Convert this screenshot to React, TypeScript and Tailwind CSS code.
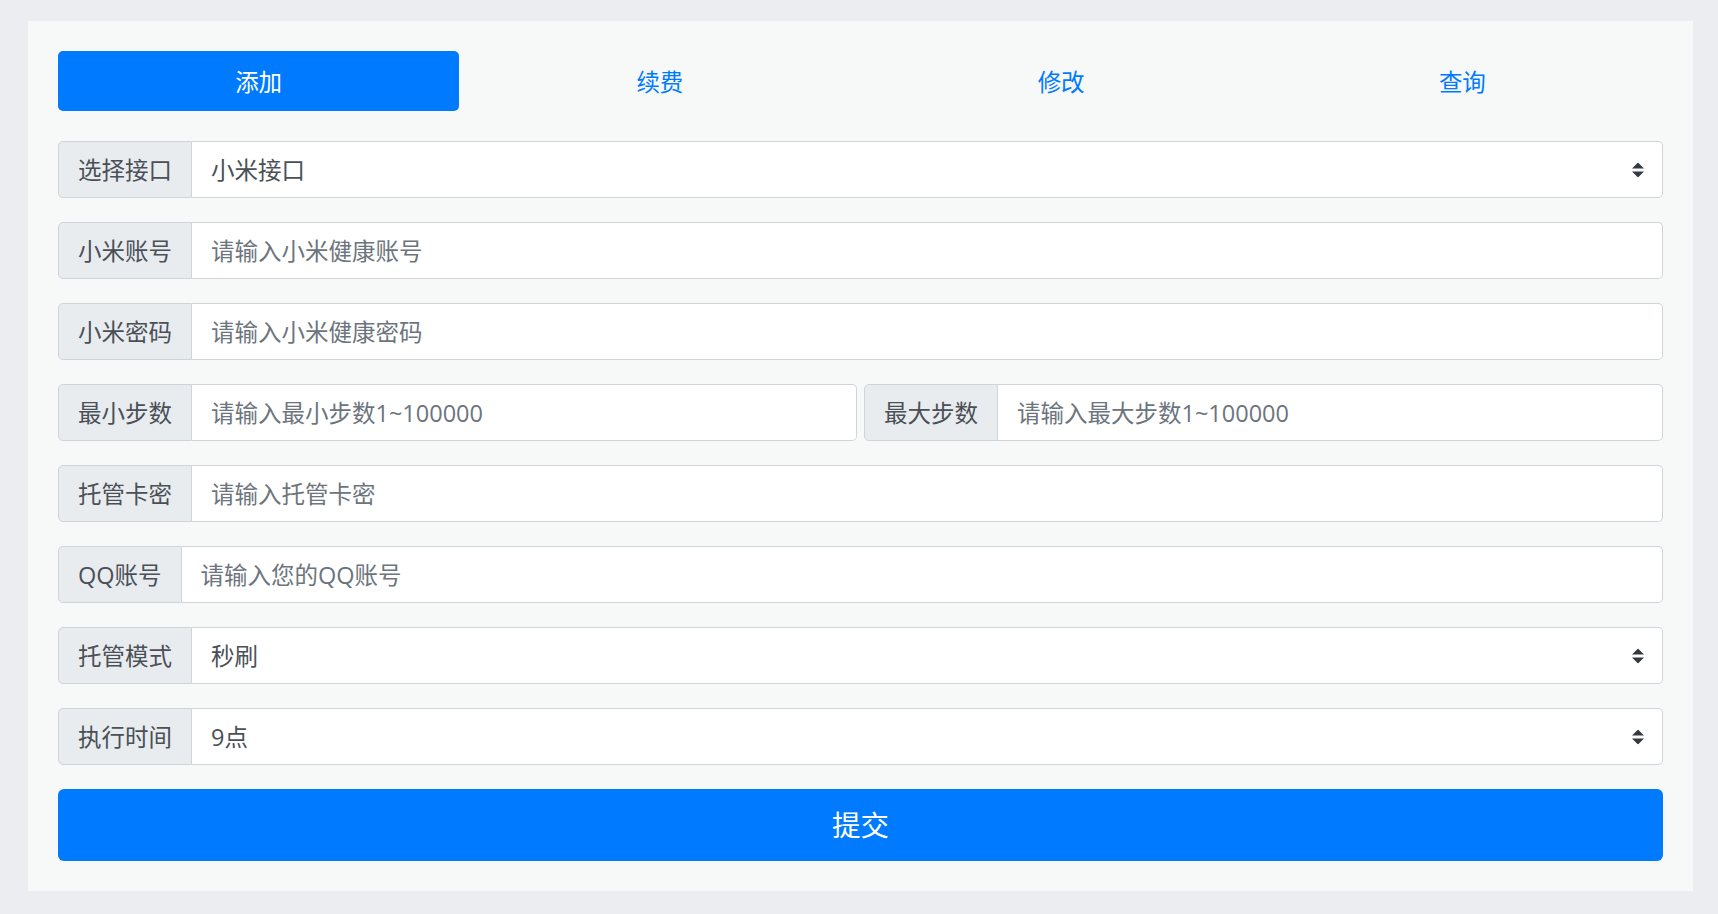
import React, { useState } from 'react';

const font = { fontFamily: '"Open Sans", "Noto Sans CJK SC", "Noto Sans", sans-serif' };

const tabs = ['添加', '续费', '修改', '查询'];

const Arrow: React.FC = () => (
  <svg
    className="pointer-events-none absolute right-[19px] top-1/2 -translate-y-1/2"
    width="12"
    height="15"
    viewBox="0 0 4 5"
  >
    <path fill="#343a40" d="M2 0L0 2h4zm0 5L0 3h4z" />
  </svg>
);

const Label: React.FC<{ text: string }> = ({ text }) => (
  <div className="flex items-center shrink-0 bg-[#e9ecef] border border-[#ced4da] rounded-l-[5px] px-[19px] pt-[2px] text-[#495057]">
    {text}
  </div>
);

const TextRow: React.FC<{ label: string; placeholder: string; className?: string }> = ({ label, placeholder, className }) => (
  <div className={`flex h-[57px] ${className ?? ''}`}>
    <Label text={label} />
    <input
      type="text"
      placeholder={placeholder}
      className="flex-1 min-w-0 bg-white border border-l-0 border-[#ced4da] rounded-r-[5px] px-[19px] pt-[2px] text-[#495057] placeholder:text-[#6c757d] outline-none"
    />
  </div>
);

const SelectRow: React.FC<{ label: string; options: string[] }> = ({ label, options }) => (
  <div className="flex h-[57px] mb-[24px]">
    <Label text={label} />
    <div className="relative flex-1">
      <select className="w-full h-full appearance-none bg-white border border-l-0 border-[#ced4da] rounded-r-[5px] px-[19px] pt-[2px] text-[#495057] outline-none">
        {options.map((o) => (
          <option key={o}>{o}</option>
        ))}
      </select>
      <Arrow />
    </div>
  </div>
);

const App: React.FC = () => {
  const [active, setActive] = useState(0);

  return (
    <div className="min-h-screen bg-[#ebedf0] pt-[21px] pb-[23px]" style={font}>
      <div className="ml-[28px] w-[1665px] bg-[#f7f8f8] p-[30px] text-[23.5px]">
        <div className="grid grid-cols-4 h-[60px] mb-[30px]">
          {tabs.map((t, i) => (
            <button
              key={t}
              onClick={() => setActive(i)}
              className={`flex items-center justify-center pt-[4px] rounded-[5px] ${
                active === i ? 'bg-[#007bff] text-white' : 'text-[#007bff]'
              }`}
            >
              {t}
            </button>
          ))}
        </div>

        <SelectRow label="选择接口" options={['小米接口']} />
        <TextRow label="小米账号" placeholder="请输入小米健康账号" className="mb-[24px]" />
        <TextRow label="小米密码" placeholder="请输入小米健康密码" className="mb-[24px]" />
        <div className="grid grid-cols-2 gap-[7px] mb-[24px]">
          <TextRow label="最小步数" placeholder="请输入最小步数1~100000" />
          <TextRow label="最大步数" placeholder="请输入最大步数1~100000" />
        </div>
        <TextRow label="托管卡密" placeholder="请输入托管卡密" className="mb-[24px]" />
        <TextRow label="QQ账号" placeholder="请输入您的QQ账号" className="mb-[24px]" />
        <SelectRow label="托管模式" options={['秒刷']} />
        <SelectRow label="执行时间" options={['9点']} />

        <button className="w-full h-[72px] flex items-center justify-center bg-[#007bff] rounded-[6px] text-white text-[28.5px]">
          提交
        </button>
      </div>
    </div>
  );
};

export default App;
